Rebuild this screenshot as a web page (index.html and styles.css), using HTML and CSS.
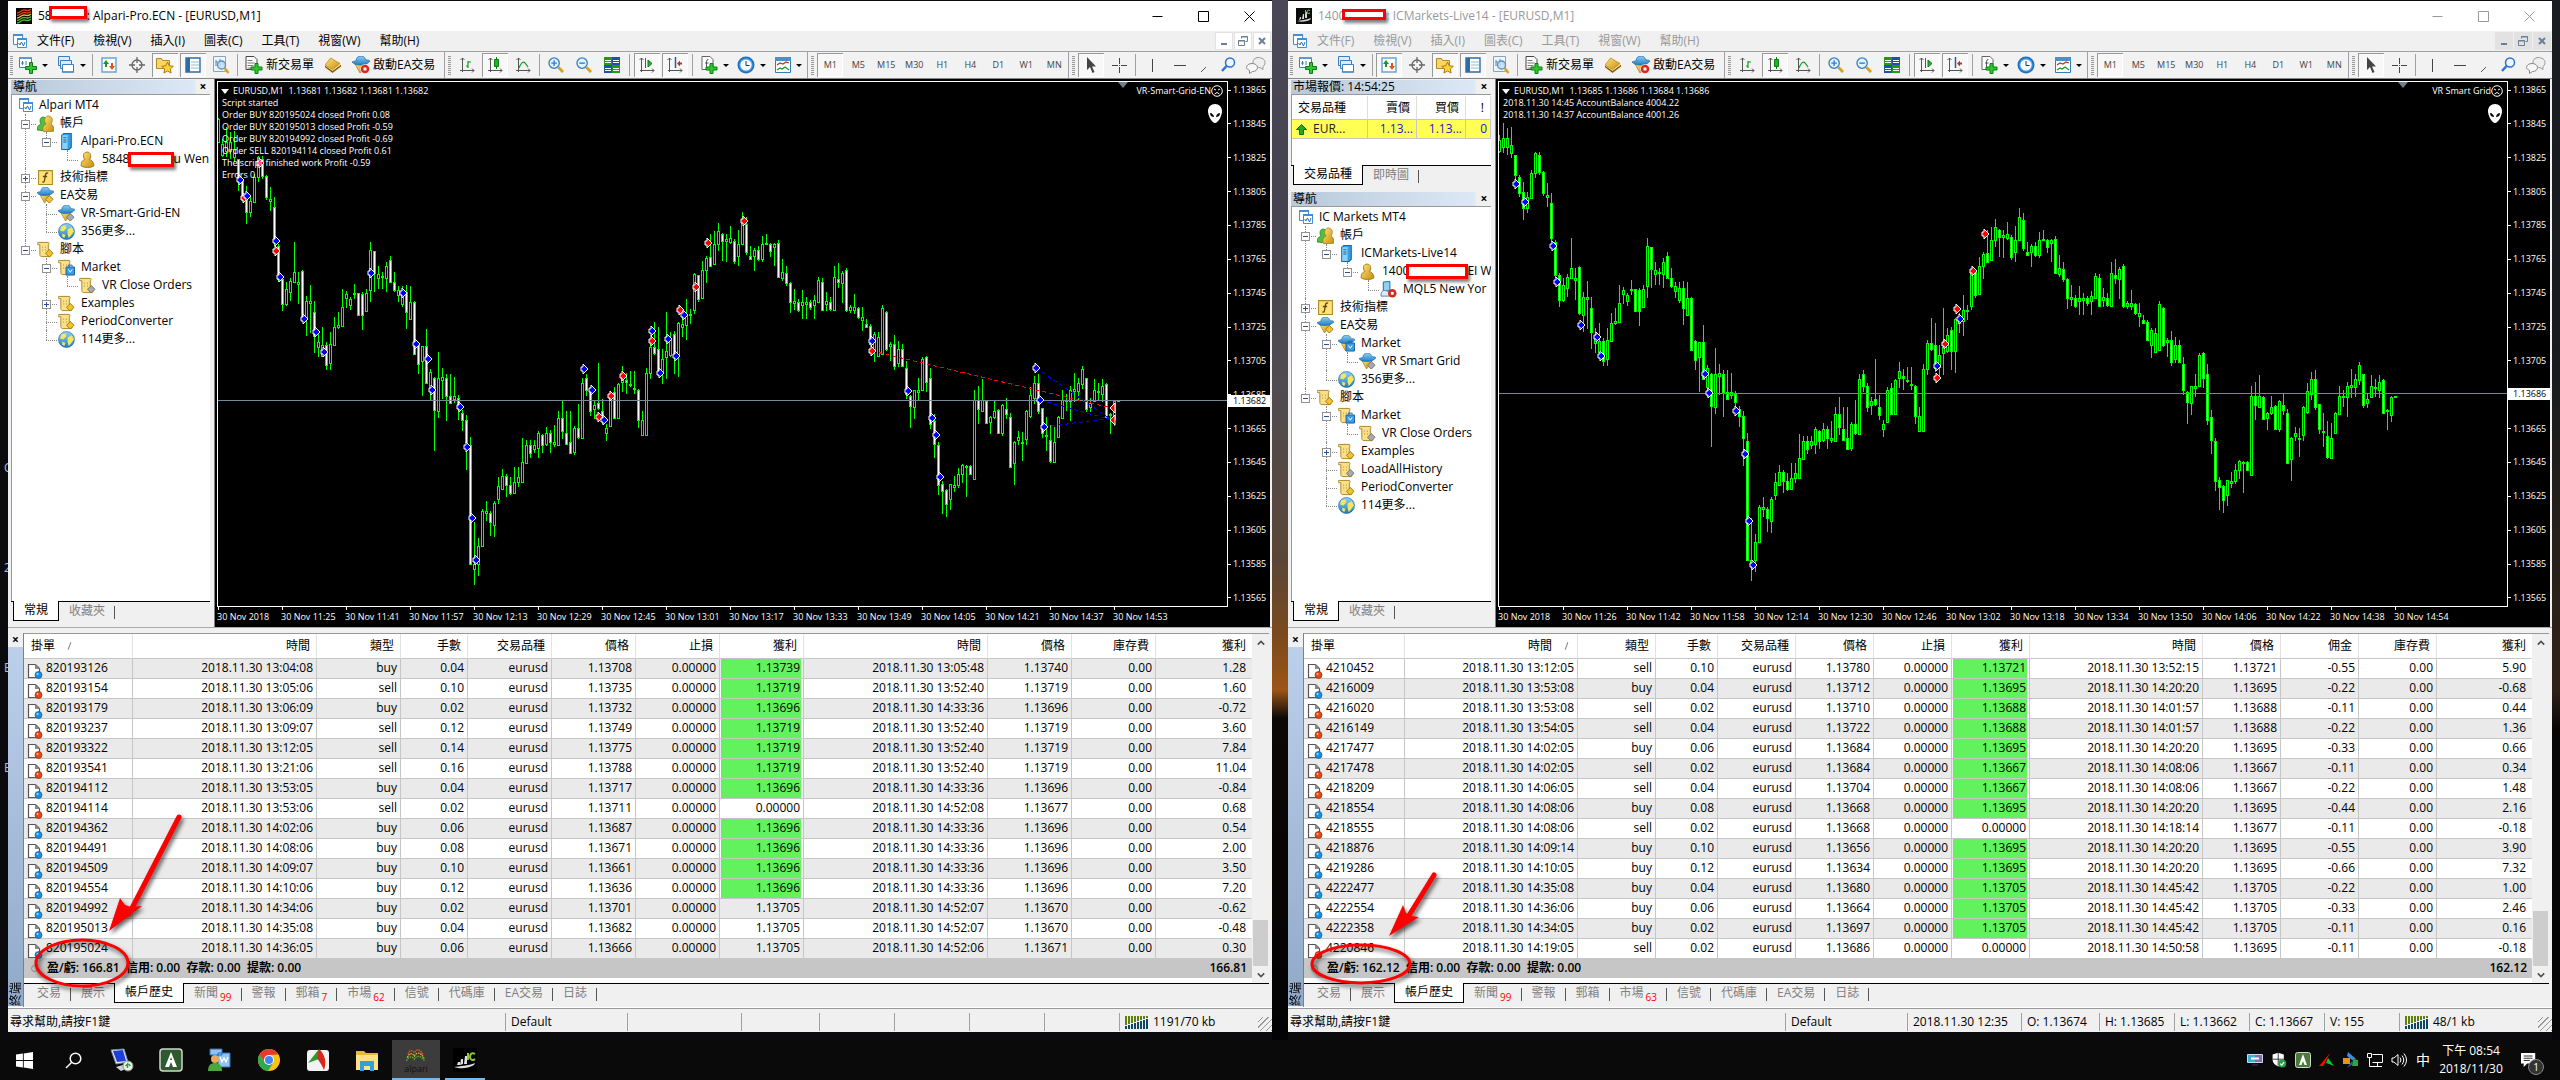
FILE: index.html
```html
<!DOCTYPE html>
<html lang="zh-Hant">
<head>
<meta charset="utf-8">
<title>MetaTrader 4</title>
<link rel="stylesheet" href="styles.css">
</head>
<body>
<svg class="sprite" aria-hidden="true">
  <defs>
    <linearGradient id="gold" x1="0" y1="0" x2="1" y2="1"><stop offset="0" stop-color="#ffe680"/><stop offset="1" stop-color="#c88a08"/></linearGradient>
    <linearGradient id="sky" x1="0" y1="0" x2="0" y2="1"><stop offset="0" stop-color="#8fd0f5"/><stop offset="1" stop-color="#1f7cc4"/></linearGradient>
  </defs>
  <symbol id="i-alpari" viewBox="0 0 16 16"><path fill="#000" d="M0 0h16v16H0z"/><g fill="none" stroke-width="1.4"><path stroke="#e8402a" d="M1 5c3 0 4-3 7-3s4 2 7-1M1 7.500c3 0 4-3 7-3s4 2 7-1"/><path stroke="#f0c020" d="M1 10c3 0 4-3 7-3s4 2 7-1"/><path stroke="#4cc030" d="M1 12.500c3 0 4-3 7-3s4 2 7-1M1 15c3 0 4-3 7-3s4 2 7-1"/></g></symbol>
  <symbol id="i-ic" viewBox="0 0 16 16"><path fill="#0c0c0c" d="M0 0h16v16H0z"/><path fill="#d8d8d8" d="M1 13c4-1 9-1 14-3l-1 2C9 14 5 14 1 13zM3 12l1-3h1v2zM6 11l1-5h1v5zM9 10V4h2v6z"/><path fill="none" stroke="#8fc640" d="M14 2.500c-2-1-3 0-3 1.500s1.500 2 3 1M9.500 2v4"/></symbol>
  <symbol id="i-mdi" viewBox="0 0 16 16"><g fill="#fff" stroke="#3f8fd6"><path d="M1.500 1.500h9v10h-9z"/><path d="M5.500 5.500h9v9h-9z"/></g><path fill="#3f8fd6" d="M1 1h10v2H1zM5 5h10v2H5z"/><path fill="none" stroke="#2a6fb8" d="M6.500 10l1.500 2 1.500-3 2 4 1.500-4"/></symbol>
  <symbol id="i-newchart" viewBox="0 0 18 18"><path fill="#fff" stroke="#3f7fb8" d="M.5 1.500h12v10H.5z"/><path fill="#5b9bd0" d="M0 1h13v2H0z"/><path stroke="#3f7fb8" fill="none" d="M3.500 5v4M2 7h3M7 5v4"/><path fill="#2fc52f" stroke="#0b7d12" d="M10.500 6.500h3v4h4v3h-4v4h-3v-4h-4v-3h4z"/></symbol>
  <symbol id="i-profiles" viewBox="0 0 18 18"><g fill="#dcecf8" stroke="#3f7fb8"><path d="M1.500.5h11v9h-11z"/><path d="M3.500 4.500h11v8h-11z"/><path fill="#fff" d="M5.500 8.500h11v8h-11z"/></g><path fill="#5b9bd0" d="M6 15h10v2H6z"/></symbol>
  <symbol id="i-market" viewBox="0 0 16 16"><path fill="#fff" stroke="#6aa7d8" stroke-width="1.500" d="M1 1h14v14H1z"/><path fill="#159a22" d="M5 3l3 4H6v3H4V7H2z"/><path fill="#e0571a" d="M11 13l3-4h-2V6h-2v3H8z"/></symbol>
  <symbol id="i-target" viewBox="0 0 16 16"><g fill="none" stroke="#666" stroke-width="1.300"><circle cx="8" cy="8" r="5"/><path d="M8 0v6M8 10v6M0 8h6M10 8h6"/></g></symbol>
  <symbol id="i-folder" viewBox="0 0 18 18"><path fill="#f7d765" stroke="#b08820" d="M.5 2.500h5l1 2h7v8H.5z"/><path fill="#ffd430" stroke="#b07808" d="M11.500 6l1.800 3.800 4 .5-3 2.700.8 4-3.600-2-3.600 2 .8-4-3-2.700 4-.5z"/></symbol>
  <symbol id="i-panel" viewBox="0 0 16 16"><path fill="#fff" stroke="#2e6da4" stroke-width="1.400" d="M1 1h14v14H1z"/><path fill="#2e6da4" d="M1 1h4v14H1z"/><path stroke="#9bc" d="M6 5h8M6 8h8M6 11h8"/></symbol>
  <symbol id="i-tester" viewBox="0 0 18 18"><path fill="#eef4fa" stroke="#8aa4bc" d="M1.500.5h12v15h-12z"/><path fill="none" stroke="#4a84b8" d="M4 10V4M4 6h2M8 11V3M11 9V5"/><circle cx="9.500" cy="9" r="4" fill="#bfe0f5" fill-opacity=".8" stroke="#5b8db8" stroke-width="1.300"/><path stroke="#d8a020" stroke-width="2.500" d="M12.500 12l4 5"/></symbol>
  <symbol id="i-order" viewBox="0 0 17 18"><path fill="#fff" stroke="#444" d="M.5.5h8l3 3v10H.5z"/><path stroke="#777" d="M2 4.500h5M2 7h7M2 9.500h6M2 12h4"/><path fill="#2fc52f" stroke="#0b7d12" d="M9.500 7.500h3v3.500h4v3h-4v3.500h-3V14h-4v-3h4z"/></symbol>
  <symbol id="i-book" viewBox="0 0 17 17"><path fill="#8a5a00" d="M0 11l8 6 9-7v-2l-9 6-8-5z"/><path fill="#fff3c8" d="M0 9l8 6 9-7-1-1-8 6-8-5z"/><path fill="url(#gold)" stroke="#b07a08" stroke-width=".7" d="M6 1l10 6-8 6.500L0 8.500z"/></symbol>
  <symbol id="i-hatgold" viewBox="0 0 18 18"><path fill="url(#gold)" stroke="#a87808" stroke-width=".7" d="M3 8l11-1-3 6-3 4z"/><path fill="url(#sky)" stroke="#1668a8" stroke-width=".7" d="M0 6c2-1 3-1 4-1 0-3 2-5 5-5s4 2 5 4c2 0 3 0 4 1-2 3-6 4-10 4S2 8 0 6z"/></symbol>
  <symbol id="i-ea" viewBox="0 0 18 18"><use href="#i-hatgold"/><circle cx="13" cy="13" r="4.600" fill="#d8271c" stroke="#fff" stroke-width=".6"/><path fill="#fff" d="M11.500 11.500h3v3h-3z"/></symbol>
  <symbol id="i-bars" viewBox="0 0 16 16"><path fill="none" stroke="#555" d="M3.500 1v14M1 13.500h14M1.500 3l2-2 2 2M13 11.500l2 2-2 2"/><path fill="none" stroke="#159a22" stroke-width="1.200" d="M9 4v7M9 9H7M9 5h3"/></symbol>
  <symbol id="i-candles" viewBox="0 0 16 16"><path fill="none" stroke="#555" d="M3.500 1v14M1 13.500h14M1.500 3l2-2 2 2M13 11.500l2 2-2 2"/><path stroke="#0b7d12" d="M9.500 0v12"/><path fill="#22b032" stroke="#0b7d12" d="M7.500 2.500h4v7h-4z"/></symbol>
  <symbol id="i-line" viewBox="0 0 16 16"><path fill="none" stroke="#555" d="M3.500 1v14M1 13.500h14M1.500 3l2-2 2 2M13 11.500l2 2-2 2"/><path fill="none" stroke="#159a22" stroke-width="1.200" d="M4 11c2-5 4-7 6-5l3 4"/></symbol>
  <symbol id="i-zoomin" viewBox="0 0 17 17"><circle cx="6.500" cy="6.500" r="5.500" fill="#e2f2ff" stroke="#2f7fc8" stroke-width="1.400"/><path stroke="#2f7fc8" stroke-width="1.500" d="M3.500 6.500h6M6.500 3.500v6"/><path stroke="#d8a020" stroke-width="3" d="M11 11l5 5"/></symbol>
  <symbol id="i-zoomout" viewBox="0 0 17 17"><circle cx="6.500" cy="6.500" r="5.500" fill="#e2f2ff" stroke="#2f7fc8" stroke-width="1.400"/><path stroke="#2f7fc8" stroke-width="1.500" d="M3.500 6.500h6"/><path stroke="#d8a020" stroke-width="3" d="M11 11l5 5"/></symbol>
  <symbol id="i-tile" viewBox="0 0 16 16"><path fill="#1f9a1f" d="M0 0h8v8H0zM8 8h8v8H8z"/><path fill="#1f4fb0" d="M8 0h8v8H8zM0 8h8v8H0z"/><path fill="#fff" d="M1 3h6v1H1zM1 5h6v1H1zM9 3h6v1H9zM9 5h6v1H9zM1 11h6v1H1zM1 13h6v1H1zM9 11h6v1H9zM9 13h6v1H9z"/></symbol>
  <symbol id="i-scroll" viewBox="0 0 16 16"><path fill="none" stroke="#555" d="M2.500 1v14M1 13.500h14M.5 3l2-2 2 2M13 11.500l2 2-2 2M6.500 1v10"/><path fill="#22b032" stroke="#0b7d12" d="M9 3l4 3.500-4 3.500z"/></symbol>
  <symbol id="i-shift" viewBox="0 0 16 16"><path fill="none" stroke="#555" d="M2.500 1v14M1 13.500h14M.5 3l2-2 2 2M13 11.500l2 2-2 2"/><path stroke="#1f5fa0" stroke-width="1.500" d="M8.500 0v11"/><path fill="#b03a1a" d="M10 6.500l3-3v2h2v2h-2v2z"/></symbol>
  <symbol id="i-ind" viewBox="0 0 17 18"><path fill="#fff" stroke="#666" d="M1.500.5h8l3 3v10h-11z"/><path fill="none" stroke="#555" d="M6 11V5.500q0-2 2-2M4.500 7H8"/><path fill="#2fc52f" stroke="#0b7d12" d="M9.500 7.500h3v3.500h4v3h-4v3.500h-3V14h-4v-3h4z"/></symbol>
  <symbol id="i-clock" viewBox="0 0 18 18"><circle cx="9" cy="9" r="8.500" fill="#1f6fc0"/><circle cx="9" cy="9" r="6.800" fill="#4aa0e8"/><circle cx="9" cy="9" r="5.600" fill="#f4f9ff"/><path fill="none" stroke="#333" d="M9 5v4.500h3.500"/></symbol>
  <symbol id="i-tmpl" viewBox="0 0 16 16"><path fill="#fff" stroke="#2e7fc0" d="M.5.500h15v15H.5z"/><path fill="#4a90cf" d="M0 0h16v4H0z"/><path fill="none" stroke="#b03a1a" stroke-width="1.200" d="M2 8l3-2 3 1 3-2 3 1"/><path fill="none" stroke="#159a22" stroke-width="1.200" d="M2 13l3-2 2 1 3-2 4 3"/></symbol>
  <symbol id="i-cursor" viewBox="0 0 16 16"><path fill="#444" d="M4 0v13l3-3 2.500 6 2-1L9 9.500h4z"/></symbol>
  <symbol id="i-cross" viewBox="0 0 16 16"><path stroke="#444" d="M8.500 1v6M8.500 10v6M1 8.500h6M10 8.500h6M8 8.500h1"/></symbol>
  <symbol id="i-vline" viewBox="0 0 16 16"><path stroke="#444" d="M8.500 2v13"/></symbol>
  <symbol id="i-hline" viewBox="0 0 16 16"><path stroke="#444" d="M2 8.500h12"/></symbol>
  <symbol id="i-diag" viewBox="0 0 16 16"><path stroke="#555" d="M5 15l5-5"/></symbol>
  <symbol id="i-find" viewBox="0 0 16 16"><circle cx="10" cy="5.500" r="4.500" fill="#eef6ff" stroke="#2f6fd8" stroke-width="1.500"/><path stroke="#2f6fd8" stroke-width="2.400" d="M6.500 9L2 14"/></symbol>
  <symbol id="i-chat" viewBox="0 0 20 18"><path fill="#eee" stroke="#999" d="M12 1.500c4 0 7 2 7 5 0 2-1 3-2 4v3l-3-2c-4 0-7-2-7-5s2-5 5-5z"/><path fill="#f8f8f8" stroke="#888" d="M6 7.500c3 0 5.500 1.500 5.500 4s-2 4-5 4l-3 2v-3c-1.500-1-3-1.500-3-3 0-2.500 2.500-4 5.500-4z"/></symbol>
  <symbol id="i-accounts" viewBox="0 0 17 17"><g stroke-width=".7"><path fill="#4fc040" stroke="#1f7a18" d="M0 15c0-4 2-5 4-6-2-3-1-7 2-7s4 3 3 6l-1 8z"/><path fill="url(#gold)" stroke="#9a7000" d="M6 16c-1-4 1-6 3-7-3-3-1-9 3-8s4 5 2 8c2 1 3 3 3 7-3 1-8 1-11 0z"/></g></symbol>
  <symbol id="i-server" viewBox="0 0 16 16"><path fill="#2f9fe0" stroke="#1668a8" d="M3.500 2l2-1.500h7v13l-2 2h-7z"/><path fill="#8fd0f5" d="M4 2h5v13H4z"/><path stroke="#1668a8" d="M5 4.500h3M5 6.500h3M5 8.500h3"/></symbol>
  <symbol id="i-user" viewBox="0 0 16 16"><path fill="url(#gold)" stroke="#9a7000" stroke-width=".8" d="M2 14c0-4 1-5 3.500-6C3 5 4 1 7.500 1S12 5 10 8c2 1 4 2 4 6-3 2-9 2-12 0z"/></symbol>
  <symbol id="i-fx" viewBox="0 0 16 16"><path fill="#ffe27a" stroke="#b08820" d="M1.500 1.500h13v13h-13z"/><path fill="none" stroke="#6a4a00" stroke-width="1.300" d="M10.500 4q-2-1-2.500 1.500L7 11q-.5 2-2 1M5.500 7h4"/></symbol>
  <symbol id="i-hat" viewBox="0 0 18 18"><use href="#i-hatgold"/><path fill="#f2c230" stroke="#a07808" d="M13 9l4 4-4 4-4-4z"/></symbol>
  <symbol id="i-hatgray" viewBox="0 0 18 18"><use href="#i-hatgold"/><path fill="#aaa" stroke="#707070" d="M13 9l4 4-4 4-4-4z"/></symbol>
  <symbol id="i-bag" viewBox="0 0 18 18"><path fill="#3f9be0" stroke="#1660a8" d="M8.500 8.500h9v8.500h-9z"/><path fill="none" stroke="#1660a8" d="M11 8V6.500h4V8"/><path fill="none" stroke="#fff" d="M11 11l2 3 2-3"/></symbol>
  <symbol id="i-hatbag" viewBox="0 0 18 18"><use href="#i-hatgold"/><use href="#i-bag"/></symbol>
  <symbol id="i-globe" viewBox="0 0 16 16"><circle cx="8" cy="8" r="7.500" fill="url(#sky)" stroke="#1668a8" stroke-width=".6"/><path fill="#f4e85a" d="M3 3l4-1 1 3-3 3-3-1zM9 6l4-2 2 4-3 4-2 2-1-4zM4 10l3 1-1 3-2-1z"/></symbol>
  <symbol id="i-roll" viewBox="0 0 18 18"><path fill="#fbe08a" stroke="#a88420" d="M1 1.500h11c1 0 1 2.500 0 2.500v9.500h2c1 0 1 3 0 3H5c-2 0-2-2-2-3V4H1C0 4 0 1.500 1 1.500z"/><path stroke="#a88420" d="M5.500 6.500h1M8.500 6.500h1M5.500 9.500h1M8.500 9.500h1"/></symbol>
  <symbol id="i-script" viewBox="0 0 18 18"><use href="#i-roll"/><path fill="#f2c230" stroke="#a07808" d="M13 9l4 4-4 4-4-4z"/></symbol>
  <symbol id="i-scriptgray" viewBox="0 0 18 18"><use href="#i-roll"/><path fill="#aaa" stroke="#707070" d="M13 9l4 4-4 4-4-4z"/></symbol>
  <symbol id="i-scriptbag" viewBox="0 0 18 18"><use href="#i-roll"/><use href="#i-bag"/></symbol>
  <symbol id="i-signal" viewBox="0 0 18 18"><path fill="#8fd0f5" stroke="#1668a8" d="M3.500 1l7-.5v10h-7z"/><path fill="#dfeaf4" stroke="#4f7fa8" d="M1 16c0-5 2-6 4-6s5 1 5 6z"/><circle cx="13" cy="13" r="4.500" fill="#d8271c"/><path fill="#fff" d="M11.500 11.500h3v3h-3z"/></symbol>
  <symbol id="i-docbuy" viewBox="0 0 16 16"><path fill="#fff" stroke="#555" stroke-width="1.200" d="M1.500 1.500h7l4 4v9h-11z"/><path fill="#888" d="M8 1l5 5H8z"/><circle cx="11.500" cy="12" r="3.500" fill="#1e8fdc" stroke="#0d5a9c" stroke-width=".7"/><circle cx="10.500" cy="11" r="1" fill="#a8dcff"/></symbol>
  <symbol id="i-docsell" viewBox="0 0 16 16"><path fill="#fff" stroke="#555" stroke-width="1.200" d="M1.500 1.500h7l4 4v9h-11z"/><path fill="#888" d="M8 1l5 5H8z"/><circle cx="11.500" cy="12" r="3.500" fill="#e04a14" stroke="#92280a" stroke-width=".7"/><circle cx="10.500" cy="11" r="1" fill="#ffc4a8"/></symbol>
  <symbol id="i-traffic" viewBox="0 0 24 13"><path stroke="#5f7f10" stroke-width="2" d="M1 0v9M4 0v8M7 0v7M10 0v6M13 0v5M16 0v4M19 0v3M22 0v2"/><path stroke="#0a4a66" stroke-width="2" d="M1 10v3M4 9v4M7 8v5M10 7v6M13 6v7M16 5v8M19 4v9M22 3v10"/></symbol>
  <symbol id="i-sad" viewBox="0 0 12 12"><g fill="none" stroke="#fff"><circle cx="6" cy="6" r="5.300"/><path d="M3.500 9q2.500-3 5 0M3 4l2 1M9 4L7 5"/></g></symbol>
  <symbol id="i-alien" viewBox="0 0 14 19"><path fill="#fff" d="M7 0c4 0 7 3 7 7 0 5-4 12-7 12S0 12 0 7c0-4 3-7 7-7z"/><path fill="#000" d="M2 9c2 0 4 2 4 4-2 0-4-1-4-4zM12 9c-2 0-4 2-4 4 2 0 4-1 4-4z"/></symbol>
</svg>

<template id="menubar">
  <svg class="icon16"><use href="#i-mdi"/></svg>
  <div class="menus">
    <button>文件(F)</button><button>檢視(V)</button><button>插入(I)</button><button>圖表(C)</button><button>工具(T)</button><button>視窗(W)</button><button>幫助(H)</button>
  </div>
  <div class="mdi-buttons">
    <button aria-label="最小化"><svg viewBox="0 0 16 16"><path stroke-width="2" d="M5 11h6"/></svg></button>
    <button aria-label="還原"><svg viewBox="0 0 16 16"><path d="M6.500 5.500v-2h6v5h-2M6 4h7M3.500 7.500h6v5h-6zM3 8h7" fill="none"/></svg></button>
    <button aria-label="關閉"><svg viewBox="0 0 16 16"><path stroke-width="2" d="M5 5l6 6M11 5l-6 6"/></svg></button>
  </div>
</template>

<template id="toolbar">
  <div class="group">
    <i class="grip"></i>
    <button class="split" aria-label="新圖表"><svg class="icon18"><use href="#i-newchart"/></svg><i class="caret"></i></button>
    <button class="split" aria-label="圖表夾"><svg class="icon18"><use href="#i-profiles"/></svg><i class="caret"></i></button>
    <i class="sep"></i>
    <button class="tool market-toggle" aria-label="市場報價"><svg class="icon16"><use href="#i-market"/></svg></button>
    <button class="tool" aria-label="數據視窗"><svg class="icon16"><use href="#i-target"/></svg></button>
    <button class="tool pressed" aria-label="導航"><svg class="icon18"><use href="#i-folder"/></svg></button>
    <button class="tool pressed" aria-label="終端"><svg class="icon16"><use href="#i-panel"/></svg></button>
    <button class="tool" aria-label="策略測試"><svg class="icon18"><use href="#i-tester"/></svg></button>
    <i class="sep"></i>
    <button class="labelled"><svg class="icon18"><use href="#i-order"/></svg>新交易單</button>
    <button class="tool" aria-label="MetaEditor"><svg class="icon16"><use href="#i-book"/></svg></button>
    <button class="labelled"><svg class="icon18"><use href="#i-ea"/></svg>啟動EA交易</button>
  </div>
  <div class="group">
    <i class="grip"></i>
    <button class="tool" aria-label="柱狀圖"><svg class="icon16"><use href="#i-bars"/></svg></button>
    <button class="tool pressed" aria-label="蠟燭圖"><svg class="icon16"><use href="#i-candles"/></svg></button>
    <button class="tool" aria-label="折線圖"><svg class="icon16"><use href="#i-line"/></svg></button>
    <i class="sep"></i>
    <button class="tool" aria-label="放大"><svg class="icon16"><use href="#i-zoomin"/></svg></button>
    <button class="tool" aria-label="縮小"><svg class="icon16"><use href="#i-zoomout"/></svg></button>
    <button class="tool" aria-label="平鋪"><svg class="icon16"><use href="#i-tile"/></svg></button>
    <i class="sep wide"></i>
    <button class="tool pressed" aria-label="自動滾動"><svg class="icon16"><use href="#i-scroll"/></svg></button>
    <button class="tool pressed" aria-label="圖表平移"><svg class="icon16"><use href="#i-shift"/></svg></button>
    <i class="sep wide"></i>
    <button class="split" aria-label="指標"><svg class="icon18"><use href="#i-ind"/></svg><i class="caret"></i></button>
    <button class="split" aria-label="週期"><svg class="icon18"><use href="#i-clock"/></svg><i class="caret"></i></button>
    <button class="split" aria-label="模板"><svg class="icon16"><use href="#i-tmpl"/></svg><i class="caret"></i></button>
  </div>
  <div class="group">
    <i class="grip"></i>
    <button class="tool tf pressed">M1</button><button class="tool tf">M5</button><button class="tool tf">M15</button><button class="tool tf">M30</button><button class="tool tf">H1</button><button class="tool tf">H4</button><button class="tool tf">D1</button><button class="tool tf">W1</button><button class="tool tf">MN</button>
  </div>
  <div class="group last">
    <i class="grip"></i>
    <button class="tool pressed" aria-label="游標"><svg class="icon16"><use href="#i-cursor"/></svg></button>
    <button class="tool" aria-label="十字線"><svg class="icon16"><use href="#i-cross"/></svg></button>
    <i class="sep"></i>
    <button class="tool" aria-label="垂直線"><svg class="icon16"><use href="#i-vline"/></svg></button>
    <button class="tool" aria-label="水平線"><svg class="icon16"><use href="#i-hline"/></svg></button>
    <button class="tool narrow" aria-label="趨勢線"><svg class="icon16"><use href="#i-diag"/></svg></button>
    <button class="tool push" aria-label="搜尋"><svg class="icon16"><use href="#i-find"/></svg></button>
    <button class="tool" aria-label="社群"><svg class="icon20"><use href="#i-chat"/></svg></button>
  </div>
</template>

<template id="winbuttons">
  <button aria-label="最小化"><svg viewBox="0 0 11 11"><path d="M.5 5.500h10"/></svg></button>
  <button aria-label="最大化"><svg viewBox="0 0 11 11"><path d="M.5.500h10v10H.5z"/></svg></button>
  <button aria-label="關閉"><svg viewBox="0 0 11 11"><path d="M.5.500l10 10M10.500.500l-10 10"/></svg></button>
</template>

<main class="desktop">
  <div class="desk-labels"><span>C</span><span>2</span><span>E</span><span>E</span></div>

  <section class="window alpari" id="alpari">
    <header class="title">
      <svg class="icon16"><use href="#i-alpari"/></svg>
      <h1>58<span class="redact"></span>: Alpari-Pro.ECN - [EURUSD,M1]</h1>
      <div class="winbuttons" data-template="winbuttons"></div>
    </header>
    <nav class="menubar" data-template="menubar"></nav>
    <div class="toolbar" data-template="toolbar"></div>

    <div class="workspace">
      <aside class="side">
        <div class="panel grow">
          <div class="panel-head"><h2>導航</h2><button aria-label="關閉">×</button></div>
          <div class="panel-body">
            <div class="row root"><svg class="icon16"><use href="#i-mdi"/></svg>Alpari MT4</div>
            <ul class="tree">
              <li><div class="row"><button class="exp" aria-label="收合"></button><svg class="icon18"><use href="#i-accounts"/></svg>帳戶</div>
                <ul>
                  <li><div class="row"><button class="exp" aria-label="收合"></button><svg class="icon16"><use href="#i-server"/></svg>Alpari-Pro.ECN</div>
                    <ul><li><div class="row"><i></i><svg class="icon16"><use href="#i-user"/></svg>5848<span class="redact"></span>u Wen j</div></li></ul>
                  </li>
                </ul>
              </li>
              <li><div class="row"><button class="exp plus" aria-label="展開"></button><svg class="icon16"><use href="#i-fx"/></svg>技術指標</div></li>
              <li><div class="row"><button class="exp" aria-label="收合"></button><svg class="icon16"><use href="#i-hat"/></svg>EA交易</div>
                <ul>
                  <li><div class="row"><i></i><svg class="icon16"><use href="#i-hatgray"/></svg>VR-Smart-Grid-EN</div></li>
                  <li><div class="row"><i></i><svg class="icon16"><use href="#i-globe"/></svg>356更多...</div></li>
                </ul>
              </li>
              <li><div class="row"><button class="exp" aria-label="收合"></button><svg class="icon16"><use href="#i-script"/></svg>腳本</div>
                <ul>
                  <li><div class="row"><button class="exp" aria-label="收合"></button><svg class="icon16"><use href="#i-scriptbag"/></svg>Market</div>
                    <ul><li><div class="row"><i></i><svg class="icon16"><use href="#i-scriptgray"/></svg>VR Close Orders</div></li></ul>
                  </li>
                  <li><div class="row"><button class="exp plus" aria-label="展開"></button><svg class="icon16"><use href="#i-script"/></svg>Examples</div></li>
                  <li><div class="row"><i></i><svg class="icon16"><use href="#i-script"/></svg>PeriodConverter</div></li>
                  <li><div class="row"><i></i><svg class="icon16"><use href="#i-globe"/></svg>114更多...</div></li>
                </ul>
              </li>
            </ul>
          </div>
          <div class="tabs"><button class="active">常規</button><button>收藏夾</button></div>
        </div>
      </aside>
      <section class="chart">
        <div class="plot">
          <svg class="candles"></svg>
          <i class="shift-mark"></i>
          <div class="chart-text">
            <p class="symbol"><i></i>EURUSD,M1&nbsp; 1.13681 1.13682 1.13681 1.13682</p>
            <p>Script started</p>
            <p>Order BUY 820195024 closed Profit 0.08</p>
            <p>Order BUY 820195013 closed Profit -0.59</p>
            <p>Order BUY 820194992 closed Profit -0.69</p>
            <p>Order SELL 820194114 closed Profit 0.61</p>
            <p>The script finished work Profit -0.59</p>
            <p>Errors 0</p>
          </div>
          <div class="expert"><span>VR-Smart-Grid-EN<svg class="sad"><use href="#i-sad"/></svg></span><svg class="alien"><use href="#i-alien"/></svg></div>
        </div>
        <div class="prices"></div>
        <div class="times"></div>
      </section>
    </div>

    <section class="terminal">
      <div class="strip"><button aria-label="關閉">×</button><span>終端</span></div>
      <div class="terminal-main">
        <div class="history">
          <table>
            <colgroup><col class="w109"><col class="w184"><col class="w84"><col class="w67"><col class="w84"><col class="w84"><col class="w84"><col class="w84"><col class="w184"><col class="w84"><col class="w84"><col></colgroup>
            <thead><tr><th>掛單<i class="sort"></i></th><th>時間</th><th>類型</th><th>手數</th><th>交易品種</th><th>價格</th><th>止損</th><th>獲利</th><th>時間</th><th>價格</th><th>庫存費</th><th>獲利</th></tr></thead>
            <tbody></tbody>
            <tfoot><tr><td colspan="11"><i class="ring"></i>盈/虧: 166.81 &nbsp;信用: 0.00 &nbsp;存款: 0.00 &nbsp;提款: 0.00</td><td>166.81</td></tr></tfoot>
          </table>
          <div class="scroll"><button aria-label="向上"><svg viewBox="0 0 10 6"><path d="M1 5l4-4 4 4"/></svg></button><i class="thumb"></i><button aria-label="向下"><svg viewBox="0 0 10 6"><path d="M1 1l4 4 4-4"/></svg></button></div>
        </div>
        <div class="tabs"><button>交易</button><button>展示</button><button class="active">帳戶歷史</button><button>新聞<sub>99</sub></button><button>警報</button><button>郵箱<sub>7</sub></button><button>市場<sub>62</sub></button><button>信號</button><button>代碼庫</button><button>EA交易</button><button>日誌</button></div>
      </div>
    </section>
    <footer class="status"><span>尋求幫助,請按F1鍵</span><span>Default</span><span></span><span></span><span></span><span></span><span></span><span></span><span><svg class="traffic"><use href="#i-traffic"/></svg>1191/70 kb</span></footer>
    <svg class="note" viewBox="0 0 200 180">
      <path class="shaft" d="M171 12L121 109"/><path class="head" d="M101 126l11-33 5 7 6 2 11-1z"/>
      <ellipse cx="74" cy="158" rx="46" ry="23"/>
    </svg>
  </section>

  <section class="window ic" id="ic">
    <header class="title">
      <svg class="icon16"><use href="#i-ic"/></svg>
      <h1>1400<span class="redact"></span>: ICMarkets-Live14 - [EURUSD,M1]</h1>
      <div class="winbuttons" data-template="winbuttons"></div>
    </header>
    <nav class="menubar" data-template="menubar"></nav>
    <div class="toolbar" data-template="toolbar"></div>

    <div class="workspace">
      <aside class="side">
        <div class="panel">
          <div class="panel-head"><h2>市場報價: 14:54:25</h2><button aria-label="關閉">×</button></div>
          <div class="panel-body quotes">
            <table>
              <colgroup><col class="w76"><col class="w49"><col class="w49"><col></colgroup>
              <thead><tr><th>交易品種</th><th>賣價</th><th>買價</th><th>!</th></tr></thead>
              <tbody><tr><td><svg viewBox="0 0 11 11"><path d="M5.500.500l5 5h-3v5h-4v-5h-3z"/></svg>EUR...</td><td>1.13...</td><td>1.13...</td><td>0</td></tr></tbody>
            </table>
          </div>
          <div class="tabs"><button class="active">交易品種</button><button>即時圖</button></div>
        </div>
        <div class="panel grow">
          <div class="panel-head"><h2>導航</h2><button aria-label="關閉">×</button></div>
          <div class="panel-body">
            <div class="row root"><svg class="icon16"><use href="#i-mdi"/></svg>IC Markets MT4</div>
            <ul class="tree">
              <li><div class="row"><button class="exp" aria-label="收合"></button><svg class="icon18"><use href="#i-accounts"/></svg>帳戶</div>
                <ul>
                  <li><div class="row"><button class="exp" aria-label="收合"></button><svg class="icon16"><use href="#i-server"/></svg>ICMarkets-Live14</div>
                    <ul><li><div class="row"><button class="exp" aria-label="收合"></button><svg class="icon16"><use href="#i-user"/></svg>1400<span class="redact"></span>EI W...</div>
                      <ul><li><div class="row"><i></i><svg class="icon18"><use href="#i-signal"/></svg>MQL5 New Yor</div></li></ul>
                    </li></ul>
                  </li>
                </ul>
              </li>
              <li><div class="row"><button class="exp plus" aria-label="展開"></button><svg class="icon16"><use href="#i-fx"/></svg>技術指標</div></li>
              <li><div class="row"><button class="exp" aria-label="收合"></button><svg class="icon16"><use href="#i-hat"/></svg>EA交易</div>
                <ul>
                  <li><div class="row"><button class="exp" aria-label="收合"></button><svg class="icon16"><use href="#i-hatbag"/></svg>Market</div>
                    <ul><li><div class="row"><i></i><svg class="icon16"><use href="#i-hatgray"/></svg>VR Smart Grid</div></li></ul>
                  </li>
                  <li><div class="row"><i></i><svg class="icon16"><use href="#i-globe"/></svg>356更多...</div></li>
                </ul>
              </li>
              <li><div class="row"><button class="exp" aria-label="收合"></button><svg class="icon16"><use href="#i-script"/></svg>腳本</div>
                <ul>
                  <li><div class="row"><button class="exp" aria-label="收合"></button><svg class="icon16"><use href="#i-scriptbag"/></svg>Market</div>
                    <ul><li><div class="row"><i></i><svg class="icon16"><use href="#i-scriptgray"/></svg>VR Close Orders</div></li></ul>
                  </li>
                  <li><div class="row"><button class="exp plus" aria-label="展開"></button><svg class="icon16"><use href="#i-script"/></svg>Examples</div></li>
                  <li><div class="row"><i></i><svg class="icon16"><use href="#i-scriptgray"/></svg>LoadAllHistory</div></li>
                  <li><div class="row"><i></i><svg class="icon16"><use href="#i-script"/></svg>PeriodConverter</div></li>
                  <li><div class="row"><i></i><svg class="icon16"><use href="#i-globe"/></svg>114更多...</div></li>
                </ul>
              </li>
            </ul>
          </div>
          <div class="tabs"><button class="active">常規</button><button>收藏夾</button></div>
        </div>
      </aside>
      <section class="chart">
        <div class="plot">
          <svg class="candles"></svg>
          <i class="shift-mark"></i>
          <div class="chart-text">
            <p class="symbol"><i></i>EURUSD,M1&nbsp; 1.13685 1.13686 1.13684 1.13686</p>
            <p>2018.11.30 14:45 AccountBalance 4004.22</p>
            <p>2018.11.30 14:37 AccountBalance 4001.26</p>
          </div>
          <div class="expert"><span>VR Smart Grid<svg class="sad"><use href="#i-sad"/></svg></span><svg class="alien"><use href="#i-alien"/></svg></div>
        </div>
        <div class="prices"></div>
        <div class="times"></div>
      </section>
    </div>

    <section class="terminal">
      <div class="strip"><button aria-label="關閉">×</button><span>終端</span></div>
      <div class="terminal-main">
        <div class="history">
          <table>
            <colgroup><col class="w101"><col class="w173"><col class="w78"><col class="w62"><col class="w78"><col class="w78"><col class="w78"><col class="w78"><col class="w173"><col class="w78"><col class="w78"><col class="w78"><col></colgroup>
            <thead><tr><th>掛單</th><th>時間<i class="sort"></i></th><th>類型</th><th>手數</th><th>交易品種</th><th>價格</th><th>止損</th><th>獲利</th><th>時間</th><th>價格</th><th>佣金</th><th>庫存費</th><th>獲利</th></tr></thead>
            <tbody></tbody>
            <tfoot><tr><td colspan="12"><i class="ring"></i>盈/虧: 162.12 &nbsp;信用: 0.00 &nbsp;存款: 0.00 &nbsp;提款: 0.00</td><td>162.12</td></tr></tfoot>
          </table>
          <div class="scroll"><button aria-label="向上"><svg viewBox="0 0 10 6"><path d="M1 5l4-4 4 4"/></svg></button><i class="thumb"></i><button aria-label="向下"><svg viewBox="0 0 10 6"><path d="M1 1l4 4 4-4"/></svg></button></div>
        </div>
        <div class="tabs"><button>交易</button><button>展示</button><button class="active">帳戶歷史</button><button>新聞<sub>99</sub></button><button>警報</button><button>郵箱</button><button>市場<sub>63</sub></button><button>信號</button><button>代碼庫</button><button>EA交易</button><button>日誌</button></div>
      </div>
    </section>
    <footer class="status"><span>尋求幫助,請按F1鍵</span><span>Default</span><span>2018.11.30 12:35</span><span>O: 1.13674</span><span>H: 1.13685</span><span>L: 1.13662</span><span>C: 1.13667</span><span>V: 155</span><span><svg class="traffic"><use href="#i-traffic"/></svg>48/1 kb</span></footer>
    <svg class="note" viewBox="0 0 200 180">
      <path class="shaft" d="M146 70L120 112"/><path class="head" d="M101 131l14-31 3 8 5 3 8 1z"/>
      <ellipse cx="73" cy="159" rx="49" ry="19"/>
    </svg>
  </section>
</main>

<footer class="taskbar">
  <button aria-label="開始"><svg viewBox="0 0 16 16" class="t16"><path fill="#fff" d="M0 2.300l6.500-.9v6.200H0zM7.300 1.300L16 0v7.600H7.300zM0 8.400h6.500v6.200L0 13.700zM7.300 8.400H16V16l-8.700-1.300z"/></svg></button>
  <button aria-label="搜尋"><svg viewBox="0 0 17 17" class="t16"><g fill="none" stroke="#fff" stroke-width="1.500"><circle cx="10.500" cy="6.500" r="5.300"/><path d="M6.500 10.500L1 16"/></g></svg></button>
  <button aria-label="遠端桌面"><svg viewBox="0 0 24 24"><path fill="#e8eef8" stroke="#7a8aa8" d="M1 2l13-1 4 13-12 2z"/><path fill="#1f3fd8" d="M3 3l10-1 3 11-9 1z"/><path fill="#cfd4dc" d="M6 19l10-3 4 3-9 4z"/><circle cx="18" cy="18" r="5" fill="#e8f4e8" stroke="#888"/><path stroke="#3a9a3a" stroke-width="1.500" fill="none" d="M15.500 18l2-2v4M20.500 18l-2-2"/></svg></button>
  <button aria-label="A"><svg viewBox="0 0 24 24"><rect x="1" y="1" width="22" height="22" rx="3" fill="#2f5a2f" stroke="#cfd8cf" stroke-width="1.500"/><path fill="#fff" d="M12 4l6 15h-4l-2-5-2 5H6z"/><path fill="#2f5a2f" d="M12 9l1 3h-2z"/></svg></button>
  <button aria-label="MT4"><svg viewBox="0 0 24 24"><path fill="#8fc4f0" stroke="#2a6fb8" d="M2 1h12v6H2zM10 5h12v14H10z"/><path fill="none" stroke="#fff" stroke-width="1.300" d="M12 9l2 5 2-4 2 4 2-5"/><circle cx="7" cy="11" r="4" fill="#e8a860"/><path fill="#4aa83a" d="M0 23c0-6 3-8 7-8s7 2 7 8z"/></svg></button>
  <button aria-label="Chrome"><svg viewBox="0 0 24 24"><circle cx="12" cy="12" r="11" fill="#fbc116"/><path fill="#e33b2e" d="M2.500 6.500A11 11 0 0 1 21.500 6.500L12 7 7.500 14z"/><path fill="#2da94f" d="M2.500 6.500A11 11 0 0 0 11 23l5.500-8.500L8 15z"/><circle cx="12" cy="12" r="5" fill="#fff"/><circle cx="12" cy="12" r="4" fill="#4285f4"/></svg></button>
  <button aria-label="看圖"><svg viewBox="0 0 24 24"><rect x="1" y="2" width="22" height="21" rx="3" fill="#f2f2f2"/><path fill="#2f9a2f" d="M2 15L13 1v10z"/><path fill="#d8271c" d="M13 1c6 5 8 14 5 21-2-5-5-9-7-12z"/></svg></button>
  <button aria-label="檔案總管"><svg viewBox="0 0 24 24"><path fill="#e8b838" d="M1 3h8l2 2h12v17H1z"/><path fill="#fce08a" d="M1 7h22v15H1z"/><path fill="#2f9fe0" d="M5 13h14v10h-4v-5H9v5H5z"/></svg></button>
  <button class="open current" aria-label="Alpari"><svg viewBox="0 0 26 20"><g fill="none" stroke-width="1.700" stroke-dasharray="2 1"><path stroke="#e84a2a" d="M3 8c2-6 5-6 8-2 3-6 8-4 11 3"/><path stroke="#d8b020" d="M2 12c3-6 6-6 9-2 3-6 9-4 12 3"/><path stroke="#5aa830" d="M1 16c3-6 7-6 10-2 3-6 10-4 13 3"/></g></svg><span>alpari</span></button>
  <button class="open" aria-label="IC Markets"><svg viewBox="0 0 24 24"><path fill="#000" d="M0 0h24v24H0z"/><path fill="#ddd" d="M1 19c6-1 14-1 21-4l-1 2c-7 4-14 4-20 2zM4 17l1-3h2v3zM7 17l1-6h2v5zM11 16l1-8h2v8z"/><path fill="none" stroke="#8fc640" stroke-width="2" d="M22 6c-3-2-5 0-5 3s3 4 5 2M15 5v7"/></svg></button>
  <div class="tray">
    <svg viewBox="0 0 16 16"><path fill="#8a6ab8" stroke="#cfd8e8" d="M.5 2.500h15v8H.5z"/><path fill="#3fb0d8" d="M1 3h7v7H1z"/><path stroke="#fff" stroke-width="2" d="M4 6.500h8"/><path fill="#223" d="M5 12h6v2H5z"/></svg>
    <svg viewBox="0 0 18 20"><path fill="#fff" d="M8 1l7 2v6c0 5-3 7-7 9-4-2-7-4-7-9V3z"/><path stroke="#111" d="M8 1v16M1 9h14"/><circle cx="13" cy="14.500" r="5" fill="#22a048"/><path fill="none" stroke="#fff" stroke-width="1.500" d="M10.500 14.500l2 2 3-4"/></svg>
    <svg viewBox="0 0 16 16"><rect x=".5" y=".5" width="15" height="15" rx="2" fill="#4a7a3a" stroke="#cfd8cf"/><path fill="#fff" d="M8 2l4 11H9.500L8 9l-1.500 4H4z"/></svg>
    <svg viewBox="0 0 16 16"><path fill="#f00" d="M0 14L11 1 7 9l-3 5z"/><path fill="#0c2" d="M9 6l6 8-5-2-3-1z"/></svg>
    <svg viewBox="0 0 16 16"><path fill="#3f8fe0" d="M5 0l8 7-4 1-5-4z"/><path fill="#e8901a" d="M0 6h7v6H0z"/><path fill="#2aa838" d="M10 7l5 1v6H9z"/><path fill="#1f5fc8" d="M4 16l5-7 1 3z"/></svg>
    <svg viewBox="0 0 16 16"><g fill="none" stroke="#fff"><path d="M5.500 2.500h10v8h-10M10.500 11v3M6 14.500h9M.5 1.500h4v4h-4zM2.500 6v8.500H6"/></g></svg>
    <svg viewBox="0 0 16 16"><g fill="none" stroke="#fff"><path d="M1 6h2l4-3.500v11L3 10H1zM9 5.500q2 2.500 0 5M11 3.500q3.500 4.500 0 9M13 1.500q5 6.500 0 13"/></g></svg>
    <span class="ime">中</span>
    <time><span>下午 08:54</span><span>2018/11/30</span></time>
    <button class="notify" aria-label="通知"><svg viewBox="0 0 18 18"><path fill="#fff" d="M0 1h16v12H7l-4 4v-4H0z"/><path stroke="#111" d="M3 4.500h10M3 7h10M3 9.500h7"/></svg><b>1</b></button>
  </div>
</footer>
<script src="app.js"></script>
</body>
</html>
```
FILE: styles.css
```css
:root {
  --ui: "Open Sans", "Noto Sans CJK TC", sans-serif;
  --face: #f0f0f0;
  --line: #a0a0a0;
  --grid: #c6c6c6;
}
* { box-sizing: border-box; }
body {
  margin: 0;
  min-height: 100vh;
  display: flex;
  flex-direction: column;
  font: 12px/16px var(--ui);
  color: #000;
  background: #050505;
}
button {
  font: inherit;
  color: inherit;
  padding: 0;
  border: 0;
  background: none;
  display: inline-flex;
  align-items: center;
  justify-content: center;
  white-space: nowrap;
}
h1, h2, p, ul { margin: 0; padding: 0; font-size: inherit; font-weight: 400; }
ul { list-style: none; }
i { font-style: normal; flex: none; }
svg { flex: none; }
.sprite { position: absolute; width: 0; height: 0; }
.icon16 { width: 16px; height: 16px; }
.icon18 { width: 18px; height: 18px; }
.icon20 { width: 20px; height: 18px; }

/* Desktop */
.desktop {
  flex: 1;
  position: relative;
  display: grid;
  grid-template-columns: 1fr 1fr;
  gap: 16px;
  padding: 1px 8px 8px;
  background:
    linear-gradient(#4a4856 0, #45424f 240px, #504c52 380px, #5a4636 560px, #7d4a1c 640px, #9c5518 690px, #0c0806 718px, #030303 100%) center / 16px 100% no-repeat,
    linear-gradient(#1a1e22 0, #171b1e 350px, #2b2219 600px, #30201a 690px, #060606 730px) right / 8px 100% no-repeat,
    #0b0b0d;
}
.desk-labels { position: absolute; left: 4px; top: 460px; width: 8px; color: #9cc4e8; }
.desk-labels span { display: block; margin-bottom: 84px; }

/* Window frame */
.window {
  position: relative;
  min-width: 0;
  display: flex;
  flex-direction: column;
  background: var(--face);
}
.title { display: flex; align-items: center; height: 30px; padding-left: 8px; background: #fff; }
.title h1 { margin-left: 6px; display: flex; white-space: pre; }
.ic .title h1, .ic .menus { color: #999; }
.winbuttons { margin-left: auto; display: flex; }
.winbuttons button { width: 46px; height: 30px; }
.winbuttons svg { width: 11px; height: 11px; fill: none; stroke: #000; }
.ic .winbuttons svg { stroke: #999; }
.redact {
  flex: none;
  width: 38px;
  height: 13px;
  background: #fff;
  border: 3px solid #f00;
  box-shadow: 2px 3px 3px rgba(0, 0, 0, .5);
}
.title .redact { margin: -2px 0 0 -3px; }
.ic .title .redact { width: 44px; height: 11px; margin-top: 1px; }
.menubar { display: flex; align-items: center; height: 20px; padding-left: 4px; }
.menus { display: flex; gap: 19px; margin-left: 9px; }
.mdi-buttons { margin-left: auto; display: flex; gap: 1px; padding-right: 1px; }
.mdi-buttons button { width: 18px; height: 18px; background: #fff; border: 1px solid #e2e2e2; }
.ic .mdi-buttons button { background: #e2e2e2; }
.mdi-buttons svg { width: 16px; height: 16px; stroke: #6c7f94; }

/* Toolbar */
.toolbar { display: flex; height: 28px; border-top: 1px solid var(--line); border-bottom: 1px solid #888; background: #f2f2f2; overflow: hidden; }
.group { display: flex; align-items: center; border-right: 1px solid var(--line); padding-right: 4px; }
.group + .group { padding: 0 0 0 1px; }
.group.last { flex: 1; border: 0; padding-right: 2px; }
.grip { width: 3px; height: 19px; margin: 0 1px 0 2px; background: repeating-linear-gradient(#999 0 1px, transparent 1px 2px); }
.group + .group .grip { margin-right: 2px; }
.sep { width: 1px; height: 22px; margin: 0 2px; background: var(--line); }
.sep.wide { margin: 0 3px; }
.tool { width: 26px; height: 24px; margin: 0 1px; }
.tool.narrow { width: 18px; }
.tool.push { margin-left: auto; }
.pressed, .ic .market-toggle {
  background: #f8f8f8;
  box-shadow: inset 1px 1px #999, inset -1px -1px #fff;
}
.split { width: 38px; height: 24px; gap: 5px; }
.group + .group .split { width: 37px; }
.caret { border: 3px solid transparent; border-top-color: #000; border-bottom: 0; }
.labelled { gap: 3px; padding: 0 5px; }
.tf { font-size: 9px; color: #444; }

/* Workspace */
.workspace { flex: 1; min-height: 500px; display: flex; border-bottom: 1px solid #aaa; }
.side { width: 207px; display: flex; flex-direction: column; gap: 3px; border-right: 1px solid #808080; padding: 1px 4px 2px 3px; }
.ic .side { width: 208px; }
.panel { display: flex; flex-direction: column; min-height: 0; }
.panel.grow { flex: 1; }
.panel-head { display: flex; align-items: center; justify-content: space-between; height: 14px; line-height: 14px; background: linear-gradient(90deg, #b9c9da, #dce8f5 184px, var(--face) 185px); }
.panel-head h2 { padding-left: 2px; }
.panel-head button { width: 12px; font-weight: 700; margin-right: 1px; }
.panel-body { flex: 1; background: #fff; border: 1px solid #999; border-width: 1px 0 0 1px; padding-top: 1px; overflow: hidden; }
.row { position: relative; display: flex; align-items: center; height: 18px; white-space: nowrap; }
.row.root { padding-left: 6px; gap: 5px; }
.tree { padding-left: 8px; }
.tree ul { padding-left: 21px; }
.tree li { position: relative; }
.tree li::before { content: ""; position: absolute; left: 5px; top: 0; bottom: 0; border-left: 1px dotted #888; }
.tree li:last-child::before { bottom: auto; height: 10px; }
.tree .row::before { content: ""; position: absolute; left: 5px; top: 10px; width: 11px; border-top: 1px dotted #888; }
.tree .row > i { width: 10px; height: 10px; }
.exp {
  flex: none;
  position: relative;
  width: 9px;
  height: 9px;
  margin: 3px 0 0 1px;
  border: 1px solid #919191;
  background: linear-gradient(#2a4fa0, #2a4fa0) center / 5px 1px no-repeat, #fff;
}
.exp.plus { background: linear-gradient(#2a4fa0, #2a4fa0) center / 5px 1px no-repeat, linear-gradient(#2a4fa0, #2a4fa0) center / 1px 5px no-repeat, #fff; }
.tree .row > svg { width: 17px; height: 17px; margin: 0 6px 0 7px; }
.row .redact { width: 46px; height: 15px; margin: 0 -1px; position: relative; }
.ic .row .redact { width: 62px; margin-left: -3px; }
.tabs { display: flex; height: 20px; margin-bottom: 4px; color: #808080; position: relative; padding-left: 3px; border-top: 1px solid #000; }
.tabs button { height: 18px; padding: 0 10px; position: relative; }
.tabs button::after { content: ""; position: absolute; right: 0; top: 4px; height: 13px; border-left: 1px solid #555; }
.tabs .active { height: 20px; margin-top: -1px; margin-left: -1px; padding-bottom: 1px; color: #000; background: #fff; border: 1px solid #000; border-top: 0; }
.tabs .active::after { content: none; }
.tabs sub { font-size: 10px; line-height: 10px; color: #f00; margin: 8px 0 0 2px; vertical-align: baseline; }

.quotes { height: 71px; flex: none; }
table { border-collapse: separate; border-spacing: 0; table-layout: fixed; width: 100%; }
th { font-weight: 400; }
.quotes th { height: 24px; padding: 0 6px 0 0; text-align: right; border-right: 1px solid #ddd; border-bottom: 1px solid var(--grid); }
.quotes th:first-child { text-align: left; padding-left: 6px; }
.quotes td { height: 19px; padding: 0 3px 0 0; text-align: right; white-space: nowrap; color: #2020c8; background: #ffff54; border-right: 1px solid var(--grid); border-bottom: 1px solid var(--grid); }
.quotes td:first-child { text-align: left; padding-left: 4px; color: #222; }
.quotes td svg { width: 11px; height: 11px; fill: #1fa82a; stroke: #0b6d12; vertical-align: -2px; margin-right: 6px; }
.w76 { width: 76px; } .w49 { width: 49px; }

/* Chart */
.chart {
  flex: 1;
  min-width: 0;
  margin-right: 2px;
  padding: 2px 0 0 2px;
  display: grid;
  grid-template: 1fr 20px / 1fr 42px;
  background: #000;
  color: #fff;
  font-size: 9px;
  line-height: 12px;
}
.plot { position: relative; border: 1px solid #fff; overflow: hidden; display: flex; justify-content: space-between; }
.candles { position: absolute; inset: 0; width: 100%; height: 100%; }
.chart-text { position: relative; padding: 3px 0 0 4px; white-space: nowrap; }
.chart-text .symbol { display: flex; align-items: center; height: 12px; }
.symbol i { border: 4px solid transparent; border-top: 5px solid #fff; border-bottom: 0; margin-right: 4px; margin-left: -1px; }
.expert { position: relative; padding: 3px 4px 0 0; display: flex; flex-direction: column; align-items: flex-end; gap: 7px; }
.expert span { display: flex; align-items: center; }
.sad { width: 12px; height: 12px; }
.alien { width: 14px; height: 19px; margin-right: 1px; }
.shift-mark { position: absolute; right: 99px; top: 0; border: 5px solid transparent; border-top: 6px solid #708090; border-bottom: 0; }
.prices { position: relative; display: flex; flex-direction: column; justify-content: space-between; padding: 3px 0; }
.prices span { display: flex; align-items: center; gap: 2px; height: 12px; }
.prices span::before { content: ""; width: 3px; border-top: 1px solid #fff; }
.prices .now { position: absolute; left: 0; right: 0; padding-left: 5px; color: #000; background: #fff; }
.prices .now::before { content: none; }
.times { grid-column: 1 / -1; display: flex; overflow: hidden; }
.times span { position: relative; flex: none; width: 64px; padding-top: 4px; white-space: nowrap; }
.times span::before { content: ""; position: absolute; left: 1px; top: 0; height: 3px; border-left: 1px solid #fff; }

/* Terminal */
.terminal { display: flex; padding: 5px 3px 0 0; border-bottom: 1px solid #fff; }
.strip { width: 15px; display: flex; flex-direction: column; align-items: center; background: linear-gradient(#bcd0ea, #8fa8c8) 0 14px no-repeat; margin-bottom: 1px; }
.strip button { height: 14px; line-height: 14px; font-weight: 700; width: 14px; }
.strip span { margin-top: auto; writing-mode: vertical-rl; text-orientation: sideways; transform: rotate(180deg); line-height: 14px; }
.terminal-main { flex: 1; min-width: 0; border-left: 1px solid #808080; border-top: 1px solid #999; }
.history { display: flex; background: #fff; }
.history table { flex: 1; width: auto; align-self: flex-start; margin-bottom: 5px; }
.history th { height: 25px; padding: 0 6px 0 0; text-align: right; border-right: 1px solid #e2e2e2; border-bottom: 1px solid var(--grid); }
.history td { height: 20px; padding: 0 3px 1px 0; line-height: 18px; text-align: right; white-space: nowrap; border-right: 1px solid var(--grid); border-bottom: 1px solid var(--grid); background: var(--row); }
.history th:first-child { text-align: left; padding-left: 7px; }
.history td:first-child { text-align: left; padding-left: 3px; }
.history tr { --row: #fff; }
.alpari .history tbody tr:nth-child(odd), .ic .history tbody tr:nth-child(even) { --row: #eaeaea; }
.history td svg { width: 16px; height: 16px; vertical-align: -5px; margin: -2px 3px -2px 0; }
.history td.hit { background: #62f25e; box-shadow: inset 1px 0 var(--row), inset -2px 0 var(--row); }
.history td:last-child, .history th:last-child { padding-right: 5px; border-right-color: transparent; }
.history tfoot td { height: 19px; padding-bottom: 2px; font-weight: 600; line-height: 17px; background: #c6c6c6; border: 0; }
.ring { display: inline-block; width: 7px; height: 7px; border: 1px solid #888; border-radius: 4px; margin: 0 9px 0 4px; }
.sort { display: inline-block; height: 8px; border-left: 1px solid #888; transform: rotate(20deg); margin: 0 4px 0 14px; }
.w109 { width: 109px; } .w184 { width: 184px; } .w84 { width: 84px; } .w67 { width: 67px; }
.w101 { width: 101px; } .w173 { width: 173px; } .w78 { width: 78px; } .w62 { width: 62px; }
.scroll { width: 17px; display: flex; flex-direction: column; background: var(--face); }
.scroll button { height: 17px; }
.scroll svg { width: 8px; height: 6px; fill: none; stroke: #505050; stroke-width: 2; }
.thumb { height: 46px; margin: auto 1px 0; background: #cdcdcd; }
.ic .thumb { height: 55px; }

.status { display: flex; height: 24px; padding: 4px 0 1px; border-top: 1px solid #999; line-height: 18px; }
.status span { padding-left: 5px; width: 75px; border-left: 1px solid var(--line); white-space: nowrap; display: flex; align-items: center; gap: 4px; }
.status span:first-child { flex: 1; border: 0; padding-left: 2px; }
.status span:nth-child(2) { width: 122px; }
.status span:nth-child(3) { width: 114px; }
.status span:nth-child(4) { width: 78px; }
.status span:last-child { width: 153px; background: repeating-linear-gradient(135deg, transparent 0 3px, #999 3px 4px) right bottom / 14px 14px no-repeat; }
.traffic { width: 24px; height: 13px; }

/* Red pen marks over the profit totals */
.note { position: absolute; left: 0; bottom: 47px; width: 200px; height: 180px; overflow: visible; fill: none; stroke: #f00; pointer-events: none; filter: drop-shadow(2px 3px 2px rgba(0, 0, 0, .6)); }
.note ellipse { stroke-width: 3; }
.note .shaft { stroke-width: 5; stroke-linecap: round; }
.note .head { fill: #f00; stroke: none; }

/* Taskbar */
.taskbar { height: 40px; display: flex; gap: 1px; background: #0a0a0a; color: #fff; }
.taskbar > button { width: 48px; height: 40px; position: relative; flex-direction: column; }
.taskbar > button svg { width: 24px; height: 24px; }
.taskbar > button svg.t16 { width: 17px; height: 17px; }
.taskbar .open::after { content: ""; position: absolute; left: 4px; right: 4px; bottom: 0; height: 2px; background: #76b9ed; }
.taskbar .current { background: #3c3c3c; }
.taskbar .current::after { left: 0; right: 0; }
.taskbar .current svg { height: 16px; }
.taskbar .current span { font-size: 9px; line-height: 9px; color: #111; }
.tray { margin-left: auto; display: flex; align-items: center; gap: 8px; padding-right: 22px; }
.tray svg { width: 16px; height: 16px; }
.ime { font-size: 14px; width: 16px; text-align: center; }
.tray time { display: flex; flex-direction: column; align-items: center; width: 64px; line-height: 18px; }
.notify { position: relative; width: 18px; height: 24px; margin-left: 9px; }
.notify b { position: absolute; left: 8px; top: 11px; width: 16px; height: 16px; border-radius: 8px; border: 1px solid #888; background: #333; font-size: 10px; line-height: 14px; font-weight: 400; }
```
FILE: app.js
```js
// Fill shared window chrome from the templates.
document.querySelectorAll('[data-template]').forEach(function (el) {
  el.append(document.getElementById(el.dataset.template).content.cloneNode(true));
});

// One-minute candles: high,low,top,bottom of the body in chart rows; "w" marks a falling candle.
var CANDLES = ('119,144,120,143 140,158,145,156 128,158,143,152 133,160,143,152 132,163,150,158 160,192,160,180w 180,202,182,198w 187,225,197,213w ' +
'197,218,202,213 175,204,178,203 157,183,158,178 157,180,160,177w 176,201,177,198w 188,212,200,202 198,247,208,243w 245,283,247,280w ' +
'278,312,280,305w 283,307,290,305 279,302,282,293 243,284,273,283 273,305,283,285 271,320,272,318w 297,337,302,320 286,334,302,304 ' +
'302,354,313,337w 333,358,343,348 328,358,346,357 343,371,346,366w 333,371,345,364 318,347,328,346 313,330,326,328 290,328,308,327 ' +
'292,309,295,299 298,311,300,306 285,300,294,295 294,317,294,316w 293,331,295,316w 290,313,294,312 243,303,251,291 252,293,252,274w ' +
'267,290,275,279 273,290,277,278 263,293,267,279 257,284,261,283w 273,293,283,291w 287,303,291,296 287,308,293,305 286,330,293,313w ' +
'287,320,303,320 302,356,303,355w 345,375,346,365w 347,397,347,362 330,385,347,384w 370,402,373,392 378,452,379,411w 353,419,379,412 ' +
'369,400,378,381 375,422,379,397w 375,405,397,404w 378,404,397,400 396,421,399,407w 411,432,414,421w 416,471,421,443w 438,565,446,565w ' +
'523,586,565,570 539,577,547,565 510,548,512,547 502,522,512,514 512,537,514,523w 502,538,504,526 478,505,487,500 470,491,477,490 ' +
'475,498,477,486w 478,496,486,494w 468,494,483,494 468,488,478,483 439,484,463,483 441,464,446,464 441,459,446,454w 441,454,446,450 ' +
'432,459,434,449 435,454,436,446w 428,447,434,445 431,454,434,443w 426,448,443,445 412,446,419,446 402,440,419,432w 412,446,434,445w ' +
'412,455,443,454w 427,456,429,453 405,440,429,438w 379,440,384,439 375,397,379,391w 388,417,391,412w 402,420,406,410 364,411,404,409w ' +
'400,425,412,420w 425,442,429,434 392,428,395,427 388,420,393,419w 384,420,385,419 367,393,376,383 374,395,381,383w 372,388,385,386 ' +
'372,395,389,390 390,429,391,421w 412,437,421,436 369,436,374,436 345,380,348,374 323,356,348,354w 328,377,350,373w 350,385,360,372 ' +
'313,380,352,358 333,358,340,356 332,375,335,356w 323,378,324,356 318,338,325,328 300,341,315,326 310,325,315,316 274,315,275,311 ' +
'276,303,276,300w 262,300,271,299 257,284,259,271 235,268,258,267w 232,266,245,265 224,252,232,245 234,262,235,242w 235,263,240,242 ' +
'227,245,239,243 240,265,242,262w 231,267,245,257 213,246,222,245 218,256,225,253w 247,260,257,260w 249,272,251,257 247,262,251,260w ' +
'237,263,245,260 235,245,244,245 244,258,245,252w 244,267,245,248 241,279,244,278w 260,282,273,279 267,287,274,284w 283,314,284,303w ' +
'290,311,302,304 300,313,303,311w 291,320,303,306 298,320,303,305 301,311,303,308w 296,320,301,306 278,304,281,303 279,312,283,311w ' +
'293,312,302,305 298,312,303,310w 267,312,278,311 264,289,280,283w 272,304,274,284 269,313,271,311w 306,314,308,311 295,315,308,311 ' +
'308,320,309,318w 308,332,318,321 320,329,325,328w 325,345,327,345w 333,363,335,350 333,358,338,357 306,355,309,355 312,352,313,350w ' +
'343,362,345,347 336,371,345,367w 342,368,350,364 345,368,350,367w 362,400,369,395w 396,429,397,407w 391,420,391,408 379,402,391,393 ' +
'358,392,360,391 357,393,358,383w 369,430,379,425w 415,459,422,445w 443,496,446,486w 482,515,485,492w 490,518,491,505w 485,511,485,500 ' +
'477,493,486,488 469,489,475,486 465,484,466,475 466,498,467,468 466,476,467,475w 391,481,401,480 387,425,401,410w 380,412,401,412 ' +
'401,425,402,424w 417,435,418,423 401,420,412,418 410,435,411,434w 405,437,406,434 399,420,410,415w 414,469,418,468w 442,486,443,464 ' +
'432,446,438,441 433,462,443,444 411,446,412,440 388,419,396,417 377,405,384,399 375,415,384,412w 409,439,409,434w 418,452,436,437 ' +
'426,464,441,462w 428,464,443,463 417,439,418,438 391,420,401,419 395,412,401,402 387,422,391,402 374,403,390,392 379,402,384,392 ' +
'367,390,370,385 379,413,379,410w 399,413,404,408 380,403,391,402 384,402,392,393 380,403,387,395 384,419,385,418w 414,435,415,416 ' +
'401,427,402,420 401,403,401,402').split(' ').map(function (s) {
  var n = s.replace('w', '').split(',').map(Number);
  return { high: n[0], low: n[1], top: n[2], bottom: n[3], fall: s.endsWith('w') };
});

function candleMarkup(list, lift) {
  return list.map(function (c, i) {
    var x = i * 4, h = Math.max(2, c.bottom - c.top + 1), top = c.top - lift;
    var s = '<path fill="#0f0" d="M' + x + ' ' + (c.high - lift) + 'h1V' + (c.low - lift) + 'h-1zM' + (x - 1) + ' ' + top + 'h3v' + h + 'h-3z"/>';
    if (h > 2) s += '<path fill="' + (c.fall ? '#fff' : '#000') + '" d="M' + x + ' ' + (top + 1) + 'h1v' + (h - 2) + 'h-1z"/>';
    return s;
  }).join('');
}
function arrowMarkup(m) {
  return '<path fill="' + (m[2] === 'r' ? '#f00' : '#00f') + '" stroke="#fff" d="M' + (m[0] - 3) + ' ' + (m[1] - 2) + 'h2v-3l5 5-5 5v-3h-2z"/>';
}
function marks(s) {
  return s.split(' ').map(function (t) { var p = t.split(','); return [+p[0], +p[1], p[2]]; });
}

function drawChart(id, o) {
  var win = document.getElementById(id);
  win.querySelector('.candles').innerHTML =
    '<g transform="translate(0 -83)" shape-rendering="crispEdges">' + candleMarkup(o.candles, o.lift) +
    '<path fill="#778899" d="M0 ' + o.now + 'h2000v1H0z"/></g>' +
    '<g transform="translate(' + -o.left + ' -83)">' + (o.extra || '') + o.marks.map(arrowMarkup).join('') + '</g>';
  var prices = '';
  for (var p = 113865; p >= 113565; p -= 20) prices += '<span>1.' + String(p).slice(1) + '</span>';
  prices += '<span class="now" style="top:' + (o.now - 87) + 'px">' + o.price + '</span>';
  win.querySelector('.prices').innerHTML = prices;
  var times = '<span>30 Nov 2018</span>';
  for (var k = 1; k < 15; k++) {
    var t = o.start + k * 16;
    times += '<span>30 Nov ' + Math.floor(t / 60) + ':' + String(t % 60).padStart(2, '0') + '</span>';
  }
  win.querySelector('.times').innerHTML = times;
}

drawChart('alpari', {
  candles: CANDLES, lift: 0, now: 401, left: 218, price: '1.13682', start: 669,
  marks: marks('240,181,b 244,199,r 247,197,b 260,164,r 276,242,b 276,252,r 280,278,b 304,320,b 316,333,b 324,353,b 371,274,b 403,294,b 416,345,b 428,360,b 432,391,b 460,408,b 467,448,b 472,519,b 476,561,b 584,370,b 592,391,b 599,418,r 604,421,b 611,397,r 623,377,r 652,342,r 652,332,b 660,374,b 668,340,b 676,357,b 680,311,r 684,316,b 696,288,r 708,244,r 744,222,r 872,342,b 872,352,r 908,392,b 932,419,b 936,436,b 940,478,b 1036,369,b 1040,401,b 1044,428,b'),
  extra: '<g fill="none" stroke-dasharray="4 3" shape-rendering="crispEdges"><path stroke="#f00" d="M872 352L1112 409"/><path stroke="#00f" d="M1036 369L1112 421M1040 401L1112 421M1044 428L1112 419"/></g>' +
    '<path fill="#f00" stroke="#fff" d="M1115 404v10l-5-5zM1115 416v10l-5-5z"/>'
});
drawChart('ic', {
  candles: CANDLES.slice(1), lift: 4, now: 394, left: 219, price: '1.13686', start: 670,
  marks: marks('236,185,b 245,203,b 273,247,b 277,283,b 301,326,b 317,338,b 321,357,b 425,375,b 429,394,b 456,412,b 465,455,b 469,522,b 473,566,b 657,367,b 657,379,r 665,345,r 677,310,r 680,320,b 693,272,r 705,235,r')
});

// Account history rows. Prices are given in points above 1.13000; "*" marks a take-profit hit.
function fillHistory(id, day, rows) {
  var body = document.getElementById(id).querySelector('.history tbody');
  body.innerHTML = rows.trim().split('\n').map(function (line) {
    var f = line.trim().split(/\s+/);
    var hit = f[5][0] === '*';
    var take = f[5].replace('*', '');
    var cells = [
      '<svg><use href="#i-doc' + f[2] + '"/></svg>' + f[0], day + f[1], f[2], f[3], 'eurusd', '1.13' + f[4], '0.00000',
      take === '0' ? '0.00000' : '1.13' + take, day + f[6], '1.13' + f[7]
    ].concat(f.slice(8));
    return '<tr>' + cells.map(function (c, i) { return '<td' + (i === 7 && hit ? ' class="hit"' : '') + '>' + c + '</td>'; }).join('') + '</tr>';
  }).join('');
}
fillHistory('alpari', '2018.11.30 ', `
820193126 13:04:08 buy 0.04 708 *739 13:05:48 740 0.00 1.28
820193154 13:05:06 sell 0.10 735 *719 13:52:40 719 0.00 1.60
820193179 13:06:09 buy 0.02 732 *696 14:33:36 696 0.00 -0.72
820193237 13:09:07 sell 0.12 749 *719 13:52:40 719 0.00 3.60
820193322 13:12:05 sell 0.14 775 *719 13:52:40 719 0.00 7.84
820193541 13:21:06 sell 0.16 788 *719 13:52:40 719 0.00 11.04
820194112 13:53:05 buy 0.04 717 *696 14:33:36 696 0.00 -0.84
820194114 13:53:06 sell 0.02 711 0 14:52:08 677 0.00 0.68
820194362 14:02:06 buy 0.06 687 *696 14:33:36 696 0.00 0.54
820194491 14:08:06 buy 0.08 671 *696 14:33:36 696 0.00 2.00
820194509 14:09:07 buy 0.10 661 *696 14:33:36 696 0.00 3.50
820194554 14:10:06 buy 0.12 636 *696 14:33:36 696 0.00 7.20
820194992 14:34:06 buy 0.02 701 705 14:52:07 670 0.00 -0.62
820195013 14:35:08 buy 0.04 682 705 14:52:07 670 0.00 -0.48
820195024 14:36:05 buy 0.06 666 705 14:52:06 671 0.00 0.30`);
fillHistory('ic', '2018.11.30 ', `
4210452 13:12:05 sell 0.10 780 *721 13:52:15 721 -0.55 0.00 5.90
4216009 13:53:08 buy 0.04 712 *695 14:20:20 695 -0.22 0.00 -0.68
4216020 13:53:08 sell 0.02 710 *688 14:01:57 688 -0.11 0.00 0.44
4216149 13:54:05 sell 0.04 722 *688 14:01:57 688 -0.22 0.00 1.36
4217477 14:02:05 buy 0.06 684 *695 14:20:20 695 -0.33 0.00 0.66
4217478 14:02:05 sell 0.02 684 *667 14:08:06 667 -0.11 0.00 0.34
4218209 14:06:05 sell 0.04 704 *667 14:08:06 667 -0.22 0.00 1.48
4218554 14:08:06 buy 0.08 668 *695 14:20:20 695 -0.44 0.00 2.16
4218555 14:08:06 sell 0.02 668 0 14:18:14 677 -0.11 0.00 -0.18
4218876 14:09:14 buy 0.10 656 *695 14:20:20 695 -0.55 0.00 3.90
4219286 14:10:05 buy 0.12 634 *695 14:20:20 695 -0.66 0.00 7.32
4222477 14:35:08 buy 0.04 680 *705 14:45:42 705 -0.22 0.00 1.00
4222554 14:36:06 buy 0.06 664 *705 14:45:42 705 -0.33 0.00 2.46
4222358 14:34:05 buy 0.02 697 *705 14:45:42 705 -0.11 0.00 0.16
4220846 14:19:05 sell 0.02 686 0 14:50:58 695 -0.11 0.00 -0.18`);
```
